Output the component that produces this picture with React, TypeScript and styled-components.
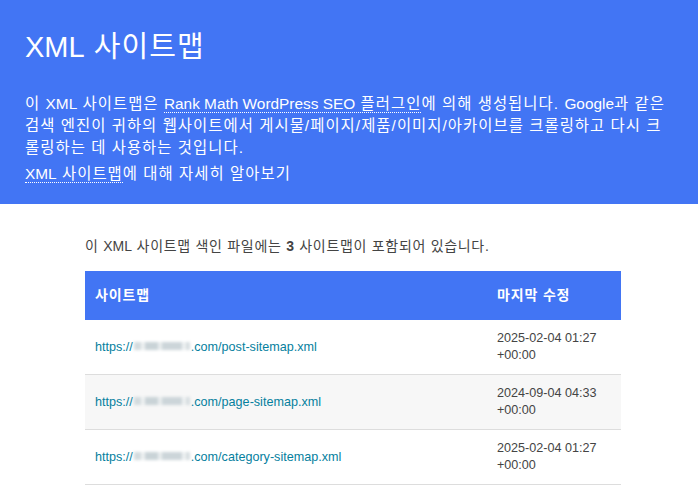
import styled, { createGlobalStyle } from "styled-components";

const GlobalStyle = createGlobalStyle`
  html, body {
    margin: 0;
    padding: 0;
    background: #fff;
  }
  body {
    font-family: "Liberation Sans", "Noto Sans CJK KR", sans-serif;
    font-size: 14px;
    color: #444;
    letter-spacing: 0.075em;
  }
`;

// Latin runs keep their natural spacing; only Hangul is opened up
const Latin = styled.span`
  letter-spacing: 0;
`;

const Description = styled.header`
  background: #4275f4;
  color: #fff;
  padding: 30px 24px 19px 25px;
`;

const Title = styled.h1`
  margin: 0 0 29px;
  font-size: 29px;
  font-weight: 400;
  line-height: 34px;
`;

const Intro = styled.p`
  margin: 0;
  font-size: 15.4px;
  line-height: 22px;
`;

const LearnMore = styled.p`
  margin: 4px 0 0;
  font-size: 15.4px;
  line-height: 22px;
`;

const DottedLink = styled.a`
  color: #fff;
  text-decoration: none;
  border-bottom: 1px dotted #fff;
`;

const Content = styled.main`
  width: 536px;
  margin-left: 85px;
  padding: 18px 0 20px;
`;

const Summary = styled.p`
  margin: 14px 0 15px;
  font-size: 14px;
  line-height: 20px;
  letter-spacing: 0.05em;
`;

const Table = styled.table`
  width: 100%;
  table-layout: fixed;
  border: none;
  border-collapse: collapse;
  font-size: 12.6px;
  letter-spacing: 0;
`;

const HeadCell = styled.th<{ $width?: number }>`
  background: #4275f4;
  color: #fff;
  text-align: left;
  padding: 15px 10px;
  font-size: 14px;
  line-height: 19px;
  font-weight: 700;
  letter-spacing: 0.06em;
  width: ${(p) => (p.$width ? `${p.$width}px` : "auto")};
`;

const Row = styled.tr`
  &:nth-child(even) {
    background: #f7f7f7;
  }
`;

const Cell = styled.td`
  padding: 10px;
  border-bottom: 1px solid #ddd;
  line-height: 17px;
  vertical-align: middle;
`;

const SitemapLink = styled.a`
  display: block;
  color: #05809e;
  text-decoration: none;
`;

const Redacted = styled.span`
  display: inline-block;
  width: 56px;
  height: 8px;
  margin: 0 1px;
  vertical-align: 1px;
  background: linear-gradient(
    90deg,
    #d3dbde 0 12%,
    #eef1f2 12% 20%,
    #c9d3d7 20% 42%,
    #e9edee 42% 50%,
    #ccd5d9 50% 86%,
    #eef1f2 86% 92%,
    #d6dde0 92%
  );
  filter: blur(1.4px);
`;

const sitemaps = [
  { slug: "post-sitemap.xml", modified: "2025-02-04 01:27 +00:00" },
  { slug: "page-sitemap.xml", modified: "2024-09-04 04:33 +00:00" },
  { slug: "category-sitemap.xml", modified: "2025-02-04 01:27 +00:00" },
];

export default function App() {
  return (
    <>
      <GlobalStyle />
      <Description>
        <Title>
          <Latin>XML</Latin> 사이트맵
        </Title>
        <Intro>
          이 <Latin>XML</Latin> 사이트맵은{" "}
          <DottedLink href="#">
            <Latin>Rank Math WordPress SEO</Latin> 플러그인
          </DottedLink>
          에 의해 생성됩니다. <Latin>Google</Latin>과 같은 검색 엔진이 귀하의 웹사이트에서
          게시물/페이지/제품/이미지/아카이브를 크롤링하고 다시 크롤링하는 데 사용하는 것입니다.
        </Intro>
        <LearnMore>
          <DottedLink href="#">
            <Latin>XML</Latin> 사이트맵
          </DottedLink>
          에 대해 자세히 알아보기
        </LearnMore>
      </Description>
      <Content>
        <Summary>
          이 <Latin>XML</Latin> 사이트맵 색인 파일에는 <strong>3</strong> 사이트맵이 포함되어 있습니다.
        </Summary>
        <Table>
          <thead>
            <tr>
              <HeadCell $width={382}>사이트맵</HeadCell>
              <HeadCell>마지막 수정</HeadCell>
            </tr>
          </thead>
          <tbody>
            {sitemaps.map((s) => (
              <Row key={s.slug}>
                <Cell>
                  <SitemapLink href="#">
                    https://<Redacted />.com/{s.slug}
                  </SitemapLink>
                </Cell>
                <Cell>{s.modified}</Cell>
              </Row>
            ))}
          </tbody>
        </Table>
      </Content>
    </>
  );
}
